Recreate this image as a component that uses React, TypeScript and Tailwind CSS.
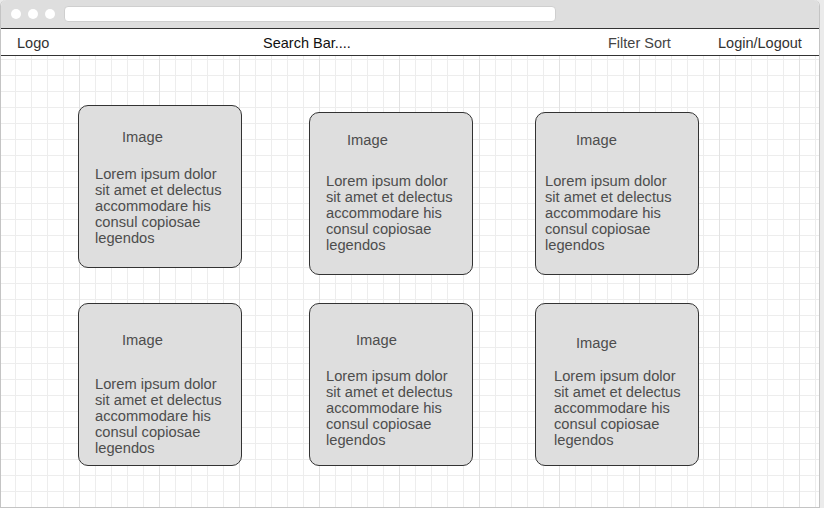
import React from 'react';

type Card = {
  imgTop: string;
  imgLeft: string;
  gap: string;
  textLeft: string;
};

const lines = ['Lorem ipsum dolor', 'sit amet et delectus', 'accommodare his', 'consul copiosae', 'legendos'];

// padding classes per card, the wireframe isn't perfectly aligned
const row1: Card[] = [
  { imgTop: 'pt-[23px]', imgLeft: 'pl-[43px]', gap: 'mt-[21px]', textLeft: 'pl-[16px]' },
  { imgTop: 'pt-[19px]', imgLeft: 'pl-[37px]', gap: 'mt-[25px]', textLeft: 'pl-[16px]' },
  { imgTop: 'pt-[19px]', imgLeft: 'pl-[40px]', gap: 'mt-[25px]', textLeft: 'pl-[9px]' },
];
const row2: Card[] = [
  { imgTop: 'pt-[28px]', imgLeft: 'pl-[43px]', gap: 'mt-[28px]', textLeft: 'pl-[16px]' },
  { imgTop: 'pt-[28px]', imgLeft: 'pl-[46px]', gap: 'mt-[20px]', textLeft: 'pl-[16px]' },
  { imgTop: 'pt-[31px]', imgLeft: 'pl-[40px]', gap: 'mt-[17px]', textLeft: 'pl-[18px]' },
];

function ProductCard({ card, className }: { card: Card; className?: string }) {
  return (
    <div
      className={`w-[164px] h-[163px] shrink-0 rounded-[10px] border border-[#333] bg-[#dedede] text-[#4d4d4d] text-[14.7px] leading-[16px] flex flex-col ${card.imgTop} ${className ?? ''}`}
    >
      <div className={card.imgLeft}>Image</div>
      <div className={`${card.gap} ${card.textLeft} flex flex-col`}>
        {lines.map((l) => (
          <span key={l} className="whitespace-nowrap">{l}</span>
        ))}
      </div>
    </div>
  );
}

export default function App() {
  return (
    <div className="w-[824px] h-[508px] bg-[#ebebeb] flex overflow-hidden font-['Liberation_Sans',Arial,sans-serif]">
      <div className="w-[820px] h-[508px] flex flex-col border-x border-b border-[#c4c4c4] rounded-t-[6px] overflow-hidden bg-white">
        {/* browser chrome */}
        <div className="h-[28px] shrink-0 bg-[#dedede] flex items-center pl-[10px]">
          <span className="w-[10px] h-[10px] rounded-full bg-white" />
          <span className="w-[10px] h-[10px] rounded-full bg-white ml-[7px]" />
          <span className="w-[10px] h-[10px] rounded-full bg-white ml-[7px]" />
          <div className="ml-[9px] w-[492px] h-[16px] rounded-[4px] bg-white border border-[#cfcfcf]" />
        </div>

        {/* nav */}
        <div className="h-[28px] shrink-0 -mx-px border border-[#333] bg-white flex items-center pt-[2px] pl-[16px] text-[14.5px] leading-[16px] text-[#333]">
          <span className="w-[246px]">Logo</span>
          <span className="w-[345px] text-[#111]">Search Bar....</span>
          <span className="w-[110px] text-[#444]">Filter Sort</span>
          <span>Login/Logout</span>
        </div>

        {/* grid canvas */}
        <div className="flex-1 bg-white bg-[image:linear-gradient(to_right,#e2e2e2_1px,transparent_1px),linear-gradient(to_right,#ededed_1px,transparent_1px),linear-gradient(to_bottom,#ededed_1px,transparent_1px)] bg-[size:80px_100%,16px_16px,16px_16px] bg-[position:78px_0,14px_3px,14px_3px] pl-[77px] pt-[49px]">
          <div className="flex items-start">
            <ProductCard card={row1[0]} />
            <ProductCard card={row1[1]} className="ml-[67px] mt-[7px]" />
            <ProductCard card={row1[2]} className="ml-[62px] mt-[7px]" />
          </div>
          <div className="flex items-start mt-[28px]">
            <ProductCard card={row2[0]} />
            <ProductCard card={row2[1]} className="ml-[67px]" />
            <ProductCard card={row2[2]} className="ml-[62px]" />
          </div>
        </div>
      </div>
    </div>
  );
}
